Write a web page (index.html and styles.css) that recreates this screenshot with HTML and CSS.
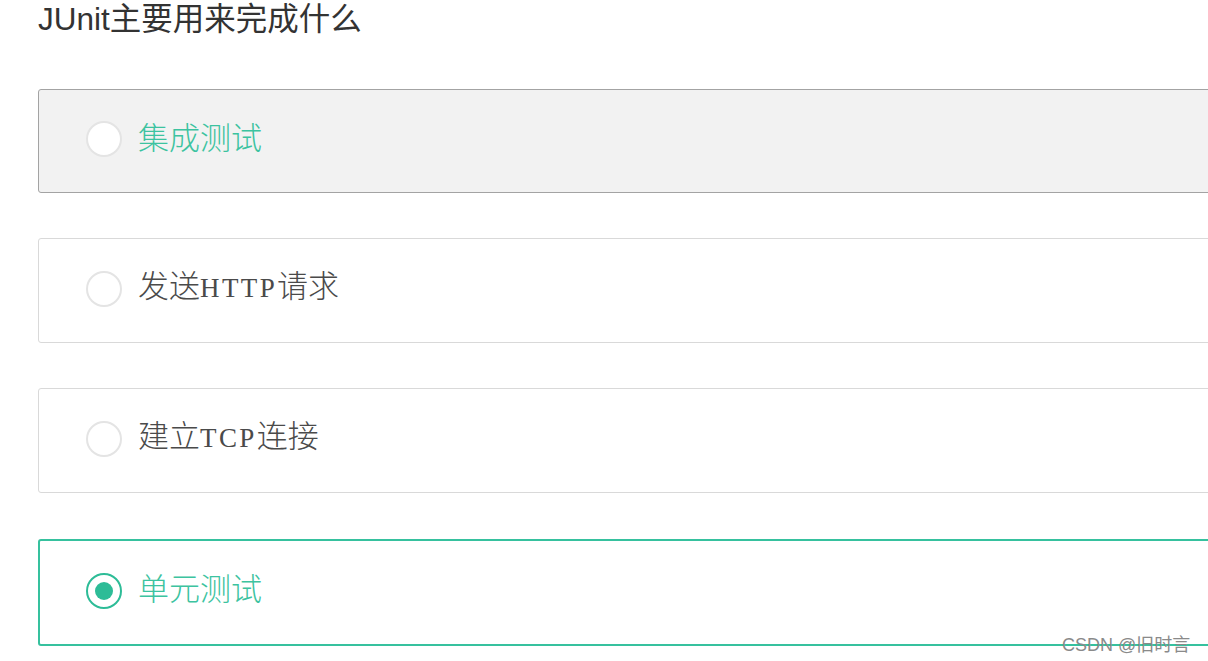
FILE: index.html
```html
<!DOCTYPE html>
<html lang="zh-CN">
<head>
    <meta charset="UTF-8">
    <title>JUnit主要用来完成什么</title>
    <link rel="stylesheet" href="styles.css">
</head>
<body>
    <div class="quiz">
        <h1 class="question">JUnit主要用来完成什么</h1>

        <div class="options">
            <div class="option hover">
                <span class="radio"></span>
                <span class="label green">集成测试</span>
            </div>
            <div class="option">
                <span class="radio"></span>
                <span class="label">发送<span class="latin">HTTP</span>请求</span>
            </div>
            <div class="option">
                <span class="radio"></span>
                <span class="label">建立<span class="latin">TCP</span>连接</span>
            </div>
            <div class="option checked">
                <span class="radio"><span class="dot"></span></span>
                <span class="label green">单元测试</span>
            </div>
        </div>
    </div>

    <div class="watermark">CSDN @旧时言</div>
</body>
</html>
```

FILE: styles.css
```css
html, body {
    margin: 0;
    padding: 0;
    background: #fff;
    overflow: hidden;
}
body {
    position: relative;
    height: 661px;
    font-family: "Liberation Sans", "Noto Sans CJK SC", sans-serif;
}
.quiz {
    padding-left: 38px;
}
.question {
    margin: 0;
    font-size: 31.5px;
    line-height: 38px;
    font-weight: normal;
    color: #333;
}
.options {
    display: flex;
    flex-direction: column;
    gap: 45px;
    margin-top: 51px;
}
.option {
    box-sizing: border-box;
    width: 1200px;
    height: 105px;
    display: flex;
    align-items: center;
    gap: 16px;
    padding-left: 47px;
    border: 1px solid #d9d9d9;
    border-radius: 3px;
    background: #fff;
}
.option.hover {
    height: 104px;
    background: #f2f2f2;
    border-color: #a3a3a3;
}
.option.checked {
    height: 107px;
    margin-top: 1px;
    border: 2px solid #36c19e;
    padding-left: 46px;
}
.radio {
    box-sizing: border-box;
    width: 36px;
    height: 36px;
    border-radius: 50%;
    border: 2px solid #e4e4e4;
    background: #fff;
    display: flex;
    align-items: center;
    justify-content: center;
    flex-shrink: 0;
    margin-bottom: 4px;
}
.checked .radio {
    border-color: #2dbc97;
}
.dot {
    width: 18px;
    height: 18px;
    border-radius: 50%;
    background: #2dbc97;
}
.label {
    font-family: "Noto Sans CJK SC", sans-serif;
    font-size: 31px;
    font-weight: 300;
    color: #4a4a4a;
    line-height: 1;
    margin-bottom: 12px;
}
.label.green {
    color: #3cc3a0;
}
.latin {
    font-family: "Liberation Serif", serif;
    font-size: 27px;
    letter-spacing: 2.4px;
    color: #4a4a4a;
}
.watermark {
    position: absolute;
    left: 1062px;
    top: 630px;
    font-family: "Liberation Sans", "Noto Sans CJK SC", sans-serif;
    font-size: 18px;
    color: #8a8a8a;
}
```
